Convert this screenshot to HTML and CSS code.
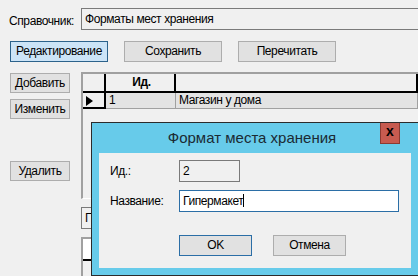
FILE: index.html
```html
<!DOCTYPE html>
<html lang="ru">
<head>
  <meta charset="UTF-8" />
  <title>Справочник</title>
  <link rel="stylesheet" href="styles.css">
</head>
<body>
  <div class="form">
    <div class="top-row">
      <span class="top-label">Справочник:</span>
      <div class="field wide">Форматы мест хранения</div>
    </div>

    <div class="toolbar">
      <div class="btn active">Редактирование</div>
      <div class="btn">Сохранить</div>
      <div class="btn">Перечитать</div>
    </div>

    <div class="main">
      <div class="side">
        <div class="btn small">Добавить</div>
        <div class="btn small">Изменить</div>
        <div class="btn small del">Удалить</div>
      </div>

      <div class="right">
        <div class="grid">
          <div class="grid-head">
            <div class="cell rh"></div>
            <div class="cell id">Ид.</div>
            <div class="cell name"></div>
          </div>
          <div class="grid-row">
            <div class="cell rh"><span class="arrow"></span></div>
            <div class="cell id">1</div>
            <div class="cell name">Магазин у дома</div>
          </div>
        </div>
        <div class="tab">П</div>
        <div class="grid2">
          <div class="grid2-head"></div>
        </div>
      </div>
    </div>
  </div>

  <div class="dialog">
    <div class="titlebar">
      <span class="title">Формат места хранения</span>
      <div class="close">x</div>
    </div>
    <div class="client">
      <div class="line">
        <span class="lbl">Ид.:</span>
        <div class="field id-field">2</div>
      </div>
      <div class="line">
        <span class="lbl">Название:</span>
        <div class="field name-field">Гипермакет<span class="caret"></span></div>
      </div>
      <div class="buttons">
        <div class="btn dlg default">OK</div>
        <div class="btn dlg">Отмена</div>
      </div>
    </div>
  </div>
</body>
</html>
```

FILE: styles.css
```css
body {
  margin: 0;
  width: 418px;
  height: 276px;
  overflow: hidden;
  position: relative;
  background: #f0f0f0;
  font-family: "Liberation Sans", Arial, sans-serif;
  font-size: 12px;
  letter-spacing: -0.4px;
  color: #000;
}
.form {
  padding: 8px 0 0 10px;
}
.top-row {
  display: flex;
  align-items: center;
  height: 22px;
}
.top-label {
  width: 72px;
  margin-left: -1px;
  padding-top: 3px;
}
.field {
  box-sizing: border-box;
  height: 22px;
  border: 1px solid #7a7a7a;
  background: #f0f0f0;
  padding: 3px 0 0 3px;
  white-space: nowrap;
}
.wide {
  flex: 1;
  margin-right: -10px;
}
.toolbar {
  display: flex;
  gap: 16px;
  margin-top: 11px;
}
.btn {
  box-sizing: border-box;
  width: 98px;
  height: 21px;
  border: 1px solid #adadad;
  background: #e1e1e1;
  text-align: center;
  line-height: 19px;
}
.btn.active {
  background: #cce4f7;
  border-color: #2c628b;
}
.main {
  display: flex;
  margin-top: 10px;
}
.side {
  width: 71px;
  padding-top: 1px;
}
.btn.small {
  width: 60px;
  height: 20px;
  line-height: 18px;
  margin-bottom: 6px;
}
.btn.del {
  margin-top: 42px;
}
.right {
  flex: 1;
}
.grid {
  height: 124px;
  border-left: 2px solid #a0a0a0;
  border-top: 2px solid #a0a0a0;
  border-bottom: 1px solid #fff;
  background: #f0f0f0;
}
.grid-head, .grid-row {
  display: flex;
}
.cell {
  box-sizing: border-box;
  height: 19px;
  padding-left: 3px;
  line-height: 17px;
  border-right: 1px solid #a0a0a0;
  border-bottom: 1px solid #a0a0a0;
}
.grid-head .cell {
  border-right: 2px solid #000;
  border-bottom: 2px solid #000;
  background: #f0f0f0;
  font-weight: bold;
  text-align: center;
}
.grid-row .cell {
  height: 16px;
  line-height: 15px;
  background: #e3e3e3;
}
.rh {
  width: 23px;
}
.grid-row .rh {
  background: #f0f0f0;
  border-right: 2px solid #000;
  border-bottom: 2px solid #000;
}
.id {
  width: 70px;
}
.name {
  flex: 1;
}
.arrow {
  display: inline-block;
  margin-top: 3px;
  border-left: 7px solid #000;
  border-top: 5px solid transparent;
  border-bottom: 5px solid transparent;
}
.tab {
  box-sizing: border-box;
  width: 40px;
  height: 22px;
  margin-top: 8px;
  border: 1px solid #7a7a7a;
  padding: 3px 0 0 3px;
}
.grid2 {
  height: 40px;
  margin-top: 8px;
  border-left: 2px solid #a0a0a0;
  border-top: 2px solid #a0a0a0;
}
.grid2-head {
  width: 21px;
  height: 20px;
  border-right: 2px solid #000;
  border-bottom: 2px solid #000;
  background: #fff;
}
.dialog {
  position: absolute;
  left: 91px;
  top: 122px;
  width: 328px;
  height: 154px;
  box-sizing: border-box;
  border: 1px solid #2b2b2b;
  background: #67cbea;
  padding: 0 7px 7px 7px;
  display: flex;
  flex-direction: column;
}
.titlebar {
  position: relative;
  height: 30px;
  text-align: center;
}
.title {
  display: inline-block;
  font-size: 15px;
  letter-spacing: 0;
  margin-top: 6px;
  color: #1b2a33;
  padding-right: 6px;
}
.close {
  position: absolute;
  right: 11px;
  top: 0;
  width: 20px;
  height: 21px;
  box-sizing: border-box;
  background: #c75b50;
  border: 1px solid #8c3a32;
  border-top: 0;
  text-align: center;
  font-weight: bold;
  font-size: 14px;
  letter-spacing: 0;
  line-height: 17px;
}
.client {
  flex: 1;
  background: #f0f0f0;
  padding: 7px 12px 0 11px;
}
.line {
  display: flex;
  align-items: center;
  margin-bottom: 8px;
}
.lbl {
  width: 69px;
}
.id-field {
  width: 61px;
}
.name-field {
  width: 220px;
  background: #fff;
  border-color: #2b6ea6;
}
.caret {
  display: inline-block;
  width: 1px;
  height: 13px;
  background: #000;
  vertical-align: -2px;
}
.buttons {
  display: flex;
  gap: 21px;
  margin-top: 23px;
  padding-left: 69px;
}
.btn.dlg {
  width: 73px;
  height: 21px;
}
.btn.default {
  border-color: #2b6ea6;
}
```
